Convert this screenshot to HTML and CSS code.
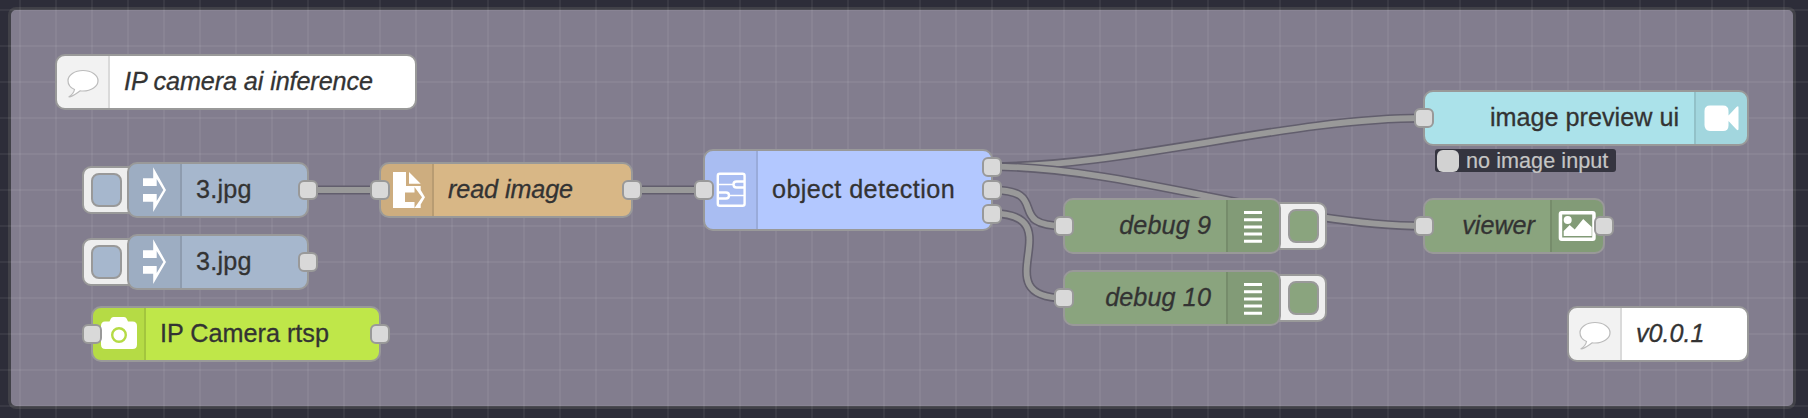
FILE: index.html
```
<!DOCTYPE html>
<html lang="en">
<head>
<meta charset="utf-8">
<title>IP camera ai inference</title>
<link rel="stylesheet" href="styles.css">
</head>
<body>
<main class="canvas">
  <section class="group"></section>
  <div class="grid"></div>

  <svg class="wires" viewBox="0 0 1808 418">
    <path class="wire-outline" d="M308 190H380M632 190H704"/>
    <path class="wire-line" d="M308 190H380M632 190H704"/>
    <path class="wire-outline" d="M992 166.600C1127 166.600 1289 118 1424 118"/>
    <path class="wire-line" d="M992 166.600C1127 166.600 1289 118 1424 118"/>
    <path class="wire-outline" d="M992 166.600C1127 166.600 1289 226 1424 226"/>
    <path class="wire-line" d="M992 166.600C1127 166.600 1289 226 1424 226"/>
    <path class="wire-outline" d="M992 190C1052.400 190 1003.600 226 1064 226"/>
    <path class="wire-line" d="M992 190C1052.400 190 1003.600 226 1064 226"/>
    <path class="wire-outline" d="M992 213.400C1075.300 213.400 980.700 298 1064 298"/>
    <path class="wire-line" d="M992 213.400C1075.300 213.400 980.700 298 1064 298"/>
  </svg>

  <article class="node comment title-note">
    <span class="icon"><svg viewBox="0 0 54 54"><path class="bubble" d="M27 15.500c8.300 0 15 4.500 15 10.200S35.300 36 27 36c-1 0-1.900 0-2.800-.2-3 1.900-6.500 5.700-11.500 6.200 2.500-1.700 5.200-4.300 5.800-7.500C14.600 32.700 12 29.500 12 25.700 12 20 18.700 15.500 27 15.500z"/></svg></span>
    <span class="label italic">IP camera ai inference</span>
  </article>

  <article class="node comment version-note">
    <span class="icon"><svg viewBox="0 0 54 54"><path class="bubble" d="M27 15.500c8.300 0 15 4.500 15 10.200S35.300 36 27 36c-1 0-1.900 0-2.800-.2-3 1.900-6.500 5.700-11.500 6.200 2.500-1.700 5.200-4.300 5.800-7.500C14.600 32.700 12 29.500 12 25.700 12 20 18.700 15.500 27 15.500z"/></svg></span>
    <span class="label italic">v0.0.1</span>
  </article>

  <div class="button inject-button first"><i></i></div>
  <article class="node inject first">
    <span class="icon"><svg viewBox="0 0 54 54"><path d="M15 15.300H25.200V4.300L38 27 25.200 49V38.700H15V31H28.700V38L35.300 27 28.700 16V23H15z"/></svg></span>
    <span class="label">3.jpg</span>
    <b class="port out"></b>
  </article>

  <div class="button inject-button second"><i></i></div>
  <article class="node inject second">
    <span class="icon"><svg viewBox="0 0 54 54"><path d="M15 15.300H25.200V4.300L38 27 25.200 49V38.700H15V31H28.700V38L35.300 27 28.700 16V23H15z"/></svg></span>
    <span class="label">3.jpg</span>
    <b class="port out"></b>
  </article>

  <article class="node camera">
    <span class="icon"><svg viewBox="0 0 54 54"><path fill-rule="evenodd" d="M13 14.500h4.500l1.300-2.800Q19.500 10 21.500 10h10.500q2 0 2.700 1.700L36 14.500h4.500q4.500 0 4.500 4.500v18.500q0 4.500-4.500 4.500h-27Q9 42 9 37.500V19q0-4.500 4-4.500zM27 20a8 8 0 1 0 0 16 8 8 0 1 0 0-16zm0 2.400a5.600 5.600 0 1 1 0 11.200 5.600 5.600 0 1 1 0-11.200z"/></svg></span>
    <span class="label">IP Camera rtsp</span>
    <b class="port in"></b><b class="port out"></b>
  </article>

  <article class="node file">
    <span class="icon"><svg viewBox="0 0 54 54"><path d="M13 9H26V23H40.700V27L45 34.300 40.700 41.500V45H34.500L42 34.300 34.500 24V29.500H25V39H34.500V45H13zM29 9L40.700 20.700H29z"/></svg></span>
    <span class="label italic read-label">read image</span>
    <b class="port in"></b><b class="port out"></b>
  </article>

  <article class="node subflow">
    <span class="icon"><svg viewBox="0 0 54 54"><g class="stroked"><rect x="13.800" y="10.800" width="26.800" height="32" rx="2"/><path d="M40 18.500H32.500Q29.500 18.500 29.500 21.500T32.500 24.500H40M14 29.500H22Q25 29.500 25 32.500T22 35.500H14"/><path class="thin" d="M15 21.500H29M26 32.500H40"/></g></svg></span>
    <span class="label wide-label">object detection</span>
    <b class="port in"></b><b class="port out upper"></b><b class="port out"></b><b class="port out lower"></b>
  </article>

  <div class="button debug-button first"><i></i></div>
  <article class="node right debug first">
    <span class="label italic">debug 9</span>
    <span class="icon"><svg viewBox="0 0 54 54"><path d="M18 12h18v3H18zM18 19.200h18v3H18zM18 26.400h18v3H18zM18 33.600h18v3H18zM18 40.800h18v3H18z"/></svg></span>
    <b class="port in"></b>
  </article>

  <div class="button debug-button second"><i></i></div>
  <article class="node right debug second">
    <span class="label italic">debug 10</span>
    <span class="icon"><svg viewBox="0 0 54 54"><path d="M18 12h18v3H18zM18 19.200h18v3H18zM18 26.400h18v3H18zM18 33.600h18v3H18zM18 40.800h18v3H18z"/></svg></span>
    <b class="port in"></b>
  </article>

  <article class="node right preview">
    <span class="label">image preview ui</span>
    <span class="icon"><svg viewBox="-0.500 0 54 54"><path d="M15.500 14.500h13q5.500 0 5.500 5.500v4.500l8-8.500q2-1.500 2 .5v21.500q0 2-2 .5l-8-8.500v4.500q0 5.500-5.500 5.500h-13Q10 39.500 10 34V20q0-5.500 5.500-5.500z"/></svg></span>
    <b class="port in"></b>
  </article>
  <div class="status"><i></i><span>no image input</span></div>

  <article class="node right viewer">
    <span class="label italic">viewer</span>
    <span class="icon"><svg viewBox="-0.700 0 54 54"><path fill-rule="evenodd" d="M11 12h31q3 0 3 3v24q0 3-3 3H11q-3 0-3-3V15q0-3 3-3zM11.500 15.500v23h30v-23z"/><circle cx="17" cy="21" r="4"/><path d="M13 37V32l6-6 5 4.500L32.500 20 41 28v9z"/></svg></span>
    <b class="port in"></b><b class="port out"></b>
  </article>
</main>
</body>
</html>
```
FILE: styles.css
```
* { box-sizing: border-box; }
body { margin: 0; font-family: "Liberation Sans", Arial, sans-serif; }

.canvas {
  position: relative;
  width: 1808px;
  height: 418px;
  overflow: hidden;
  background: #2d2d39;
}
.group {
  position: absolute;
  left: 8px;
  top: 7px;
  width: 1788px;
  height: 402px;
  border: 3px solid #414148;
  border-radius: 8px;
  background: #827d8e;
}
.grid {
  position: absolute;
  inset: 0;
  background-image:
    linear-gradient(to right, rgba(255, 255, 255, .055) 2px, transparent 2px),
    linear-gradient(to bottom, rgba(255, 255, 255, .055) 2px, transparent 2px);
  background-size: 36px 36px;
  background-position: 19px 9px;
}
.wires { position: absolute; inset: 0; width: 1808px; height: 418px; fill: none; }
.wire-outline { stroke: #625e6d; stroke-width: 9; }
.wire-line { stroke: #999; stroke-width: 5.800; }

/* Nodes on the canvas */
.node {
  position: absolute;
  display: flex;
  align-items: center;
  height: 56px;
  border: 2px solid #999;
  border-radius: 10px;
  color: #333;
}
.icon {
  flex: none;
  align-self: stretch;
  display: grid;
  place-items: center;
  width: 53px;
  border-right: 2px solid rgba(0, 0, 0, .1);
  border-radius: 8px 0 0 8px;
  background: rgba(0, 0, 0, .05);
}
.icon svg { width: 54px; height: 54px; margin: -1px; fill: #fff; }
.label {
  flex: 1;
  padding: 0 15px 2px 14px;
  font-size: 25.200px;
  line-height: 30px;
  white-space: nowrap;
  -webkit-text-stroke: .3px #333;
}
.italic { font-style: italic; }
.title-note .label, .read-label { letter-spacing: -.1px; }
.wide-label { letter-spacing: .42px; }
.inject .label { letter-spacing: .2px; }
.debug .label { letter-spacing: .1px; }
.right .label { text-align: right; }
.right .icon {
  border-right: 0;
  border-left: 2px solid rgba(0, 0, 0, .1);
  border-radius: 0 8px 8px 0;
}
.right .icon svg { margin-left: -3px; }
.bubble { fill: #fff; stroke: #bbb; stroke-width: 1.200; }
.stroked { fill: none; stroke: #fff; stroke-width: 2.400; }
.thin { stroke-width: 1.400; }

.port {
  position: absolute;
  top: calc(50% - 10px);
  width: 20px;
  height: 20px;
  border: 2px solid #999;
  border-radius: 6px;
  background: #d9d9d9;
}
.port.in { left: -11px; }
.port.out { right: -11px; }
.port.upper { top: 6px; }
.port.lower { top: 53px; }

.comment { background: #fff; }
.inject { background: #a6b7cd; }
.camera { background: #bfe749; }
.file { background: #d8b786; }
.subflow { background: #b3c8ff; }
.debug, .viewer { background: #8aa47e; }
.preview { background: #abe2ea; }

.title-note { left: 55px; top: 54px; width: 362px; }
.version-note { left: 1567px; top: 306px; width: 182px; }
.inject { left: 127px; width: 182px; }
.node.inject.first { top: 162px; }
.node.inject.second { top: 234px; }
.camera { left: 91px; top: 306px; width: 290px; }
.file { left: 379px; top: 162px; width: 254px; }
.subflow { left: 703px; top: 149px; width: 290px; height: 82px; }
.debug { left: 1063px; width: 218px; }
.node.debug.first { top: 198px; }
.node.debug.second { top: 270px; }
.preview { left: 1423px; top: 90px; width: 326px; }
.viewer { left: 1423px; top: 198px; width: 182px; }

/* Side buttons */
.button {
  position: absolute;
  width: 60px;
  height: 48px;
  padding: 5px 6px;
  border: 2px solid #999;
  border-radius: 9px;
  background: #eee;
}
.button i {
  display: block;
  width: 31px;
  height: 34px;
  border: 2px solid #999;
  border-radius: 8px;
}
.inject-button { left: 82px; padding-left: 7px; }
.inject-button i { background: #a6b7cd; }
.inject-button.first { top: 166px; }
.inject-button.second { top: 238px; }
.debug-button { left: 1267px; width: 60px; padding-right: 6px; display: flex; justify-content: flex-end; }
.debug-button i { background: #8aa47e; }
.debug-button.first { top: 202px; }
.debug-button.second { top: 274px; }

.status {
  position: absolute;
  left: 1435px;
  top: 149px;
  display: flex;
  align-items: center;
  gap: 7px;
  width: 181px;
  height: 23px;
  padding-left: 2px;
  border-radius: 3px;
  background: #353540;
  color: #c5c5c5;
  font-size: 21.600px;
  line-height: 23px;
  white-space: nowrap;
}
.status i { width: 22px; height: 22px; border-radius: 6px; background: #d2d2d2; }
.status span { letter-spacing: .05px; -webkit-text-stroke: .2px #c5c5c5; }
```
